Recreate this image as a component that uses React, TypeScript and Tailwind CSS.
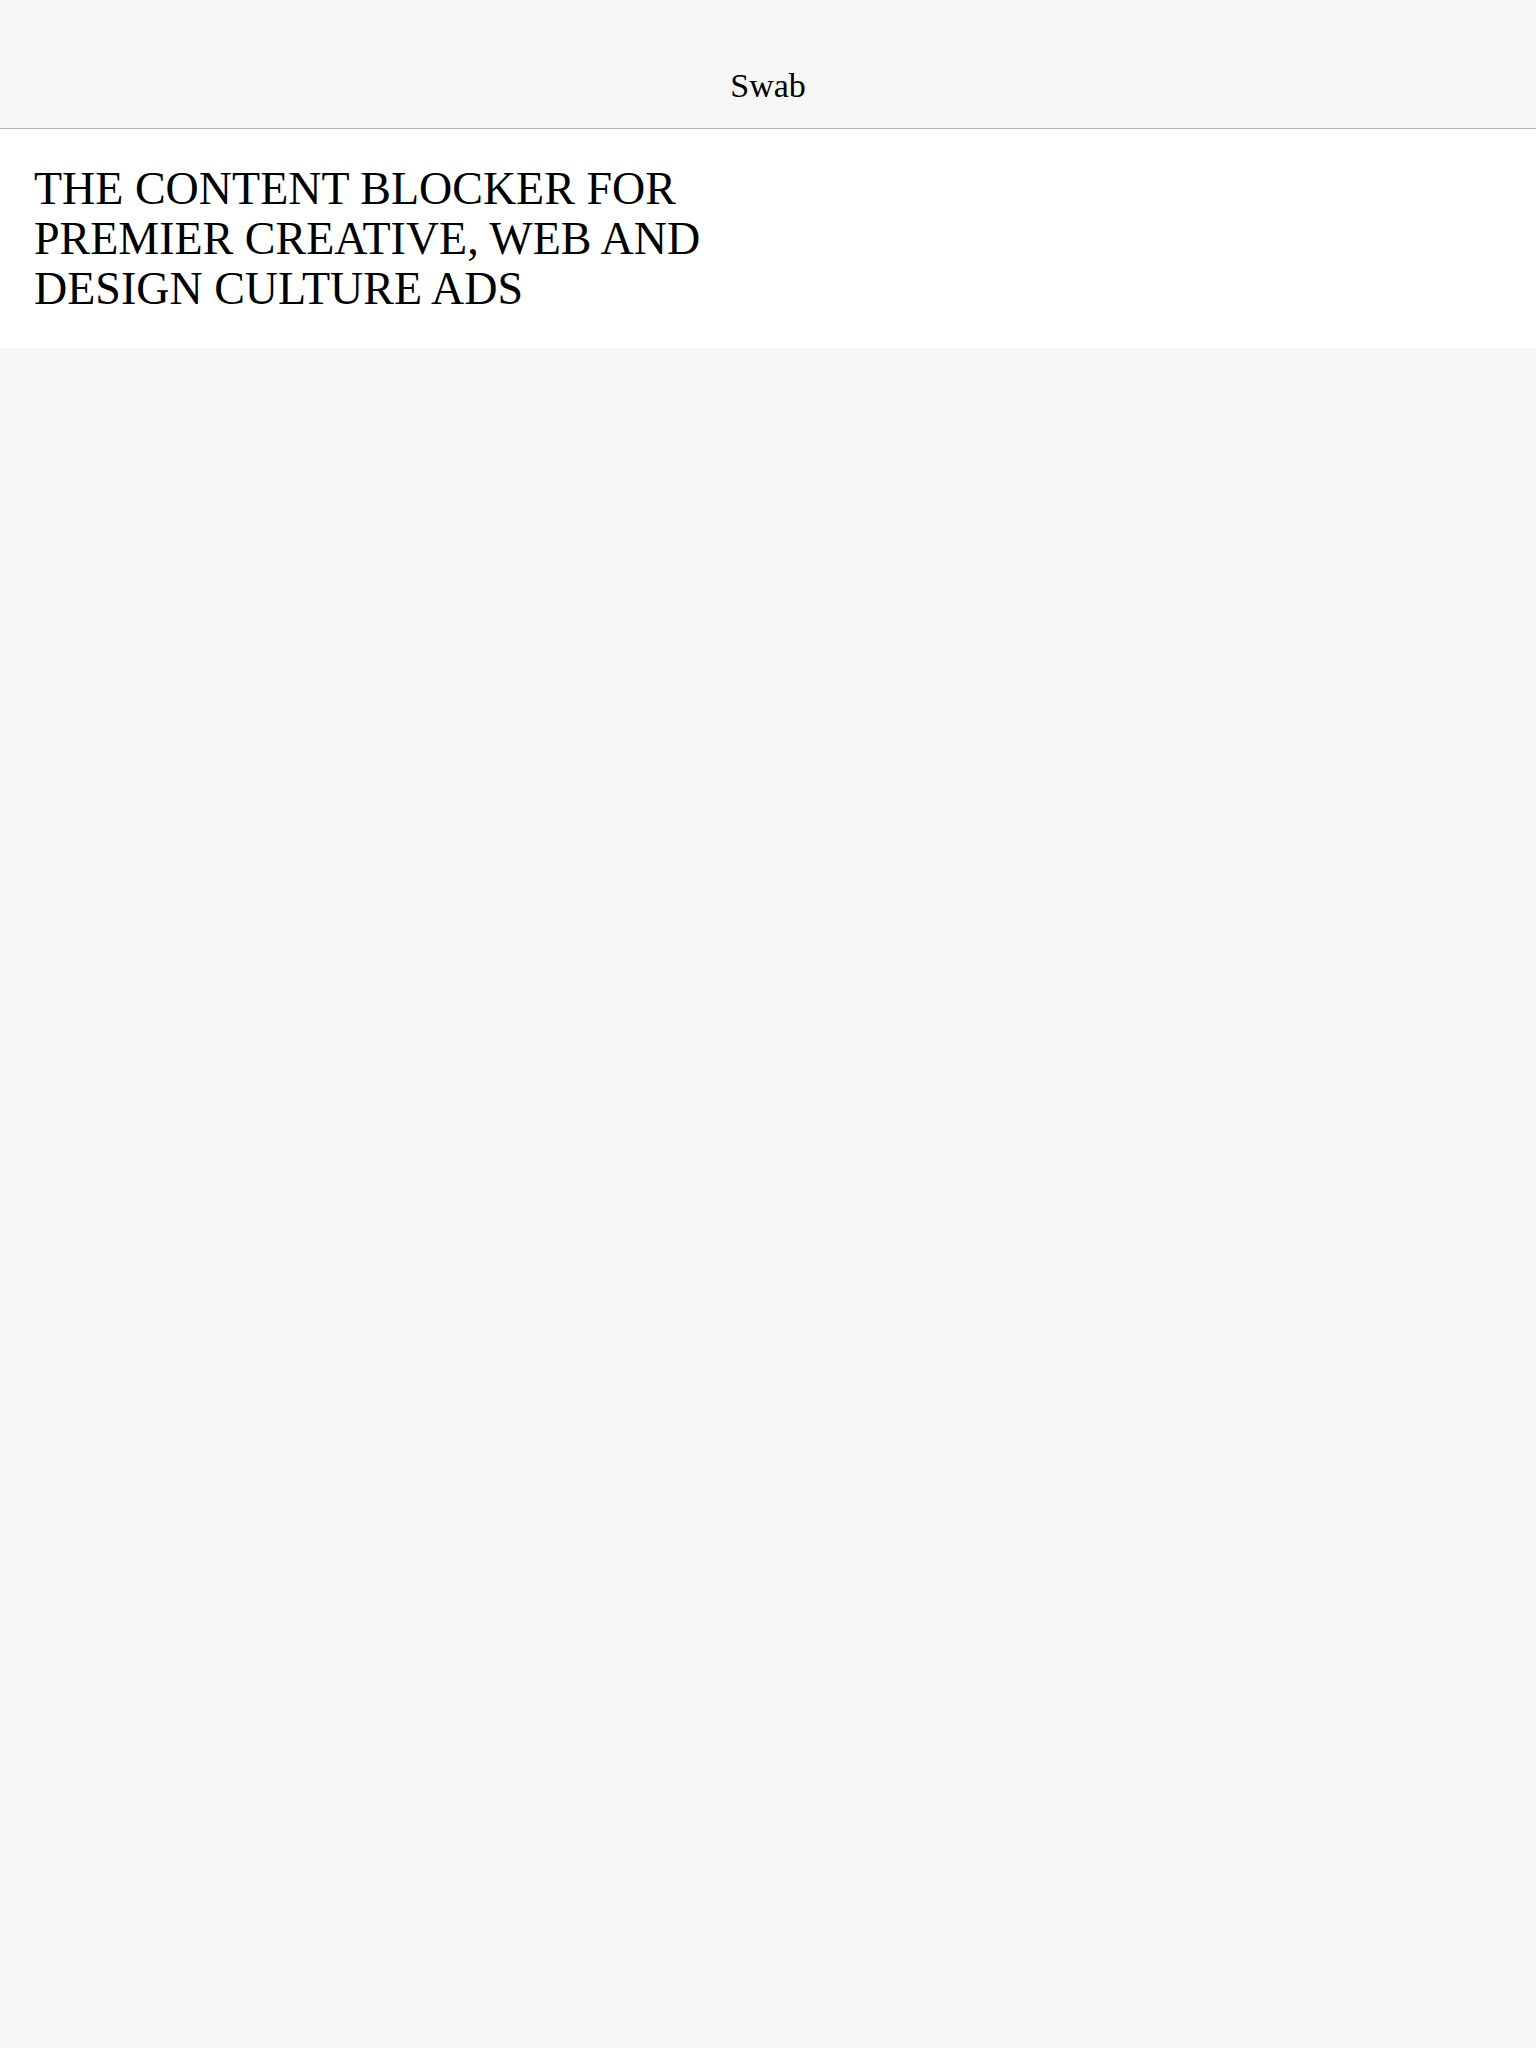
export default function App() {
  return (
    <main className="min-h-[2048px] bg-[#f6f6f6]" style={{ fontFamily: '"Liberation Serif", "DejaVu Serif", serif' }}>
      {/* Header */}
      <header className="h-[129px] flex items-end justify-center pb-[25px] bg-[#f6f6f6] border-b border-[#b3b3b3]">
        <span className="text-[34px] leading-none text-black">Swab</span>
      </header>

      {/* Hero */}
      <section className="bg-white px-[34px] pt-[35px] pb-[34px]">
        <h1 className="max-w-[740px] text-[46px] leading-[50px] font-normal text-black uppercase">
          The content blocker for premier creative, web and design culture ads
        </h1>
      </section>
    </main>
  );
}
